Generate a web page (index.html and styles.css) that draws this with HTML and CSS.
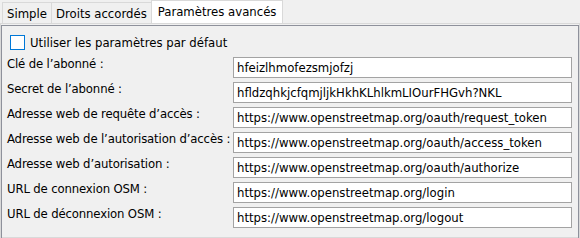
FILE: index.html
```html
<!DOCTYPE html>
<html lang="fr">

<head>
  <meta charset="UTF-8">
  <title>Paramètres avancés</title>
  <link rel="stylesheet" href="styles.css">
</head>

<body>
  <div class="tabs">
    <div class="tab">Simple</div>
    <div class="tab">Droits accordés</div>
    <div class="tab active">Paramètres avancés</div>
  </div>

  <div class="panel">
    <div class="frame">
      <label class="check-row">
        <span class="check-box"></span>
        <span>Utiliser les paramètres par défaut</span>
      </label>

      <div class="form">
        <span class="form-label">Clé de l’abonné :</span>
        <div class="field">hfeizlhmofezsmjofzj</div>

        <span class="form-label">Secret de l’abonné :</span>
        <div class="field">hfldzqhkjcfqmjljkHkhKLhlkmLIOurFHGvh?NKL</div>

        <span class="form-label">Adresse web de requête d’accès :</span>
        <div class="field">https://www.openstreetmap.org/oauth/request_token</div>

        <span class="form-label">Adresse web de l’autorisation d’accès :</span>
        <div class="field">https://www.openstreetmap.org/oauth/access_token</div>

        <span class="form-label">Adresse web d’autorisation :</span>
        <div class="field">https://www.openstreetmap.org/oauth/authorize</div>

        <span class="form-label">URL de connexion OSM :</span>
        <div class="field">https://www.openstreetmap.org/login</div>

        <span class="form-label">URL de déconnexion OSM :</span>
        <div class="field">https://www.openstreetmap.org/logout</div>
      </div>
    </div>
  </div>
</body>

</html>
```
FILE: styles.css
```css
body {
  margin: 0;
  width: 580px;
  height: 238px;
  background-color: #f0f0f0;
  font-family: "DejaVu Sans Condensed", "DejaVu Sans", sans-serif;
  font-size: 13px;
  color: #000;
  overflow: hidden;
}

/* tab bar */
.tabs {
  display: flex;
  align-items: flex-end;
  height: 23px;
  padding-left: 2px;
}

.tab {
  height: 21px;
  line-height: 22px;
  padding: 0 4px;
  margin-right: -1px;
  border: 1px solid #d9d9d9;
  border-bottom: none;
  box-sizing: border-box;
  background-color: #f0f0f0;
  white-space: nowrap;
}

.tab.active {
  position: relative;
  height: 23px;
  line-height: 21px;
  padding: 0 6px;
  background-color: #fff;
}

/* page frame */
.panel {
  height: 215px;
  box-sizing: border-box;
  border: 1px solid #d9d9d9;
}

.frame {
  height: 210px;
  margin-top: 1px;
  padding: 8px 5px 0 5px;
  border: 1px solid #8e919b;
}

.check-row {
  display: flex;
  align-items: center;
  gap: 5px;
  height: 16px;
  margin-left: 3px;
  margin-bottom: 7px;
}

.check-box {
  width: 13px;
  height: 13px;
  border: 1px solid #0078d7;
  background-color: #fff;
}

.form {
  display: grid;
  grid-template-columns: 226px 339px;
  row-gap: 4px;
}

.form-label {
  margin-top: -1px;
  line-height: 15px;
  white-space: nowrap;
  letter-spacing: -0.15px;
}

.field {
  height: 21px;
  box-sizing: border-box;
  padding: 0 3px;
  line-height: 19px;
  border: 1px solid #a3a3a3;
  background-color: #fff;
  white-space: nowrap;
  overflow: hidden;
}
```
